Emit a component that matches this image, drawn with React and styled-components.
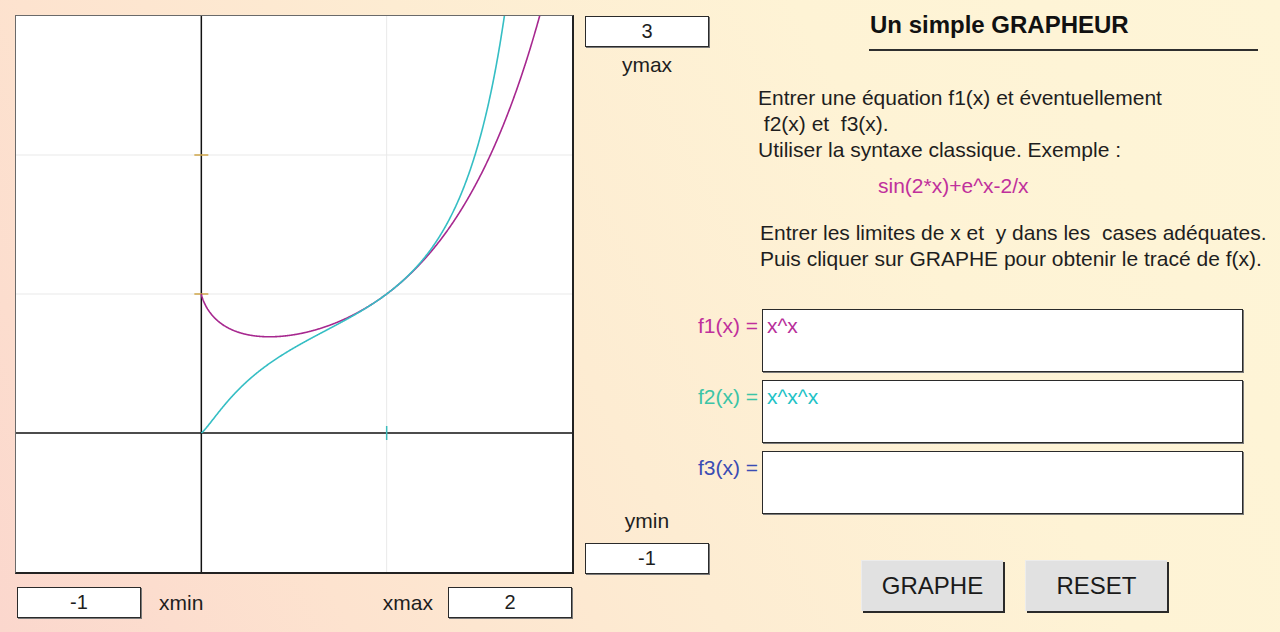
import { useMemo } from "react";
import styled, { createGlobalStyle } from "styled-components";

const GlobalStyle = createGlobalStyle`
  html, body {
    margin: 0;
    height: 100%;
  }
  body {
    font-family: "Liberation Sans", Arial, sans-serif;
    color: #1e1e1e;
    background: linear-gradient(62deg, #fbd7cd 0%, #fde3cf 22%, #fdecd2 45%, #fef3d5 70%, #fef5d7 100%);
    overflow: hidden;
  }
`;

const Page = styled.div`
  display: flex;
  align-items: flex-start;
  width: 1280px;
  height: 632px;
`;

const LeftCol = styled.div`
  display: flex;
  flex-direction: column;
  width: 559px;
  margin-left: 15px;
  padding-top: 15px;
`;

const Plot = styled.div`
  width: 559px;
  height: 559px;
  box-sizing: border-box;
  background: #fff;
  border-top: 1px solid #6a6a6a;
  border-left: 1px solid #6a6a6a;
  border-right: 2px solid #222;
  border-bottom: 2px solid #222;

  svg {
    display: block;
  }
`;

const AxisRow = styled.div`
  display: flex;
  justify-content: space-between;
  align-items: center;
  margin-top: 13px;
  padding: 0 2px;
`;

const AxisGroup = styled.div`
  display: flex;
  align-items: center;
  gap: ${(p) => p.gap || 0}px;
`;

const ValueBox = styled.div`
  width: 124px;
  height: 31px;
  box-sizing: border-box;
  background: #fff;
  border: 1px solid #2a2a2a;
  box-shadow: 1px 1px 0 #7a7a7a;
  display: flex;
  align-items: center;
  justify-content: center;
  font-size: 20px;
  color: #1e1e1e;
`;

const AxisLabel = styled.div`
  font-size: 21px;
  line-height: 24px;
  text-align: center;
  color: #1e1e1e;
`;

const MidCol = styled.div`
  display: flex;
  flex-direction: column;
  width: 124px;
  height: 574px;
  box-sizing: border-box;
  margin-left: 11px;
  padding-top: 16px;
`;

const TopGroup = styled.div`
  display: flex;
  flex-direction: column;
  gap: 6px;
`;

const BottomGroup = styled.div`
  display: flex;
  flex-direction: column;
  gap: 10px;
  margin-top: auto;
`;

const RightCol = styled.div`
  display: flex;
  flex-direction: column;
  width: 582px;
  margin-left: -11px;
  padding-top: 11px;
`;

const TitleBlock = styled.div`
  width: 388px;
  margin-left: 171px;
  padding: 0 0 10px 1px;
  border-bottom: 2px solid #2e2e2e;
`;

const Title = styled.h1`
  margin: 0;
  font-size: 24px;
  line-height: 28px;
  font-weight: bold;
  color: #111;
`;

const Para = styled.p`
  margin: ${(p) => p.top}px 0 0 ${(p) => p.indent}px;
  font-size: 21px;
  line-height: 26px;
  white-space: pre;
  color: ${(p) => p.color || "#1e1e1e"};
`;

const FuncList = styled.div`
  display: flex;
  flex-direction: column;
  gap: 8px;
  margin-top: 37px;
`;

const FuncRow = styled.div`
  display: flex;
  align-items: flex-start;
  gap: 4px;
`;

const FuncLabel = styled.div`
  width: 60px;
  padding-top: 4px;
  font-size: 21px;
  line-height: 26px;
  white-space: nowrap;
  text-align: right;
  color: ${(p) => p.color};
`;

const FuncBox = styled.div`
  width: 481px;
  height: 63px;
  box-sizing: border-box;
  padding: 3px 4px;
  background: #fff;
  border: 1px solid #2a2a2a;
  box-shadow: 1px 1px 0 #7a7a7a;
  font-size: 21px;
  line-height: 26px;
  color: ${(p) => p.color};
`;

const ButtonRow = styled.div`
  display: flex;
  gap: 22px;
  margin: 46px 0 0 163px;
`;

const Button = styled.button`
  width: 142px;
  height: 51px;
  border: none;
  border-top: 1px solid #ececec;
  border-left: 1px solid #ececec;
  background: #e1e1e1;
  box-shadow: 2px 2px 0 #2a2a2a;
  font-family: "Liberation Sans", Arial, sans-serif;
  font-size: 24px;
  color: #1a1a1a;
  padding: 0;
  cursor: pointer;
`;

const W = 556;
const H = 556;
const X0 = -1;
const X1 = 2;
const Y0 = -1;
const Y1 = 3;
const sx = (x) => ((x - X0) / (X1 - X0)) * W;
const sy = (y) => ((Y1 - y) / (Y1 - Y0)) * H;

function tracePath(f) {
  const n = 1500;
  let d = "";
  let pen = false;
  for (let i = 0; i <= n; i++) {
    const x = X0 + ((X1 - X0) * i) / n;
    const y = f(Math.abs(x) < 1e-12 ? 0 : x);
    if (!isFinite(y) || y > 20 || y < -20) {
      pen = false;
      continue;
    }
    d += (pen ? "L" : "M") + sx(x).toFixed(2) + " " + sy(y).toFixed(2);
    pen = true;
  }
  return d;
}

const curves = [
  { f: (x) => Math.pow(x, x), color: "#a7288f" },
  { f: (x) => Math.pow(x, Math.pow(x, x)), color: "#35bec4" },
];

function Graph() {
  const paths = useMemo(() => curves.map((c) => tracePath(c.f)), []);
  const ox = sx(0);
  const oy = sy(0);
  return (
    <Plot>
      <svg width={W} height={H} viewBox={`0 0 ${W} ${H}`}>
        <g stroke="#e9e9e9" strokeWidth="1">
          <line x1={sx(1)} y1="0" x2={sx(1)} y2={H} />
          <line x1="0" y1={sy(1)} x2={W} y2={sy(1)} />
          <line x1="0" y1={sy(2)} x2={W} y2={sy(2)} />
        </g>
        <g stroke="#111" strokeWidth="1.5">
          <line x1={ox} y1="0" x2={ox} y2={H} />
          <line x1="0" y1={oy} x2={W} y2={oy} />
        </g>
        <g stroke="#cfa64a" strokeWidth="1.5">
          <line x1={ox - 7} y1={sy(1)} x2={ox + 7} y2={sy(1)} />
          <line x1={ox - 7} y1={sy(2)} x2={ox + 7} y2={sy(2)} />
        </g>
        <line x1={sx(1)} y1={oy - 7} x2={sx(1)} y2={oy + 7} stroke="#3cbcbc" strokeWidth="1.5" />
        {paths.map((d, i) => (
          <path key={i} d={d} fill="none" stroke={curves[i].color} strokeWidth="1.6" />
        ))}
      </svg>
    </Plot>
  );
}

export default function App() {
  return (
    <>
      <GlobalStyle />
      <Page>
        <LeftCol>
          <Graph />
          <AxisRow>
            <AxisGroup gap={18}>
              <ValueBox>-1</ValueBox>
              <AxisLabel>xmin</AxisLabel>
            </AxisGroup>
            <AxisGroup gap={15}>
              <AxisLabel>xmax</AxisLabel>
              <ValueBox>2</ValueBox>
            </AxisGroup>
          </AxisRow>
        </LeftCol>

        <MidCol>
          <TopGroup>
            <ValueBox>3</ValueBox>
            <AxisLabel>ymax</AxisLabel>
          </TopGroup>
          <BottomGroup>
            <AxisLabel>ymin</AxisLabel>
            <ValueBox>-1</ValueBox>
          </BottomGroup>
        </MidCol>

        <RightCol>
          <TitleBlock>
            <Title>Un simple GRAPHEUR</Title>
          </TitleBlock>
          <Para top={34} indent={60}>
            {"Entrer une équation f1(x) et éventuellement\n f2(x) et  f3(x).\nUtiliser la syntaxe classique. Exemple :"}
          </Para>
          <Para top={10} indent={180} color="#c0309c">
            sin(2*x)+e^x-2/x
          </Para>
          <Para top={21} indent={62}>
            {"Entrer les limites de x et  y dans les  cases adéquates.\nPuis cliquer sur GRAPHE pour obtenir le tracé de f(x)."}
          </Para>
          <FuncList>
            <FuncRow>
              <FuncLabel color="#c0309c">f1(x) =</FuncLabel>
              <FuncBox color="#b8309a">x^x</FuncBox>
            </FuncRow>
            <FuncRow>
              <FuncLabel color="#3cc4a6">f2(x) =</FuncLabel>
              <FuncBox color="#22c2c6">x^x^x</FuncBox>
            </FuncRow>
            <FuncRow>
              <FuncLabel color="#3a4cb4">f3(x) =</FuncLabel>
              <FuncBox />
            </FuncRow>
          </FuncList>
          <ButtonRow>
            <Button>GRAPHE</Button>
            <Button>RESET</Button>
          </ButtonRow>
        </RightCol>
      </Page>
    </>
  );
}
